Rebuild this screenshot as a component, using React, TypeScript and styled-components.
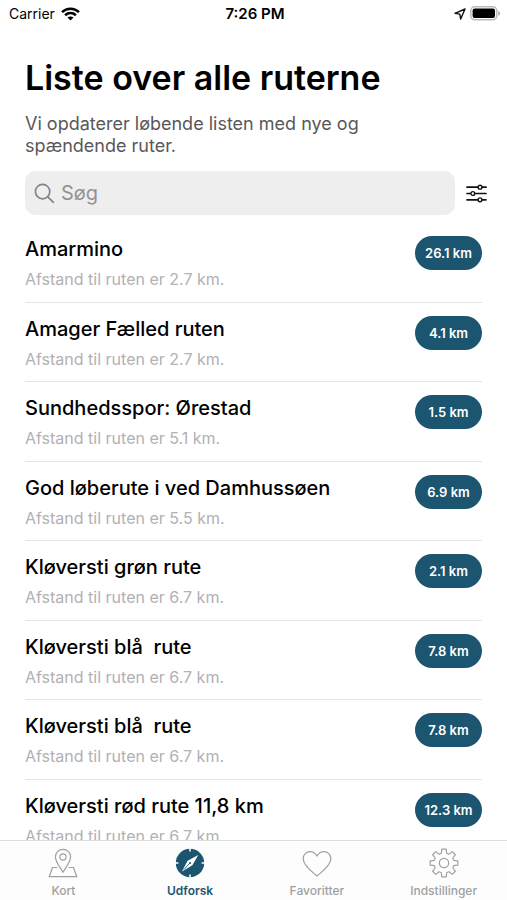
import React, { useState } from "react";
import styled, { createGlobalStyle } from "styled-components";

const teal = "#1c5570";

const GlobalStyle = createGlobalStyle`
  * { box-sizing: border-box; }
  body {
    margin: 0;
    background: #fff;
    color: #000;
    font-family: Inter, "Liberation Sans", sans-serif;
  }
  h1, h2, p, ul { margin: 0; padding: 0; }
  button, input { font: inherit; }
`;

const Screen = styled.div`
  display: flex;
  flex-direction: column;
  height: 100vh;
`;

const StatusBar = styled.header`
  display: grid;
  grid-template-columns: 1fr auto 1fr;
  align-items: center;
  height: 27px;
  flex: none;
  padding: 0 6px 0 9px;
  font-size: 14px;
`;

const StatusGroup = styled.div<{ $end?: boolean }>`
  display: flex;
  align-items: center;
  gap: ${(p) => (p.$end ? "4px" : "6px")};
  justify-content: ${(p) => (p.$end ? "flex-end" : "flex-start")};
`;

const Clock = styled.span`
  font-size: 15px;
  font-weight: 600;
`;

const Content = styled.main`
  flex: 1;
  min-height: 0;
  overflow-y: auto;
  scrollbar-width: none;
  padding: 31px 25px 0;
`;

const Title = styled.h1`
  font-size: 34px;
  line-height: 40px;
  font-weight: 600;
`;

const Intro = styled.p`
  max-width: 350px;
  margin-top: 15px;
  font-size: 18px;
  line-height: 22px;
  color: #58585a;
`;

const SearchRow = styled.form`
  display: flex;
  align-items: center;
  gap: 11px;
  margin: 14px -5px 0 0;
`;

const SearchField = styled.label`
  flex: 1;
  display: flex;
  align-items: center;
  gap: 6px;
  height: 44px;
  padding: 0 9px;
  border-radius: 11px;
  background: #eee;
  color: #858588;
`;

const SearchInput = styled.input`
  flex: 1;
  min-width: 0;
  padding: 0;
  border: 0;
  outline: 0;
  background: transparent;
  font-size: 20px;
  color: #000;
  &::placeholder { color: #929295; opacity: 1; }
`;

const FilterButton = styled.button`
  display: flex;
  padding: 0;
  border: 0;
  background: none;
  color: #111;
`;

const RouteList = styled.ul`
  margin-top: 8px;
  list-style: none;
`;

const RouteItem = styled.li`
  display: flex;
  align-items: flex-start;
  justify-content: space-between;
  height: 79px;
  padding-top: 13px;
  border-bottom: 1px solid #e4e4e5;
  &:nth-child(odd) { height: 80px; }
`;

const RouteName = styled.h2`
  font-size: 20px;
  line-height: 26px;
  font-weight: 500;
  white-space: pre;
`;

const Distance = styled.p`
  margin-top: 6px;
  font-size: 16px;
  line-height: 22px;
  color: #b1b1b3;
`;

const LengthBadge = styled.span`
  display: flex;
  align-items: center;
  justify-content: center;
  width: 67px;
  height: 34px;
  border-radius: 17px;
  background: ${teal};
  color: #fff;
  font-size: 13px;
  font-weight: 600;
`;

const TabBar = styled.nav`
  display: grid;
  grid-template-columns: repeat(4, 1fr);
  flex: none;
  height: 60px;
  border-top: 1px solid #dedede;
  background: #fdfdfd;
`;

const Tab = styled.button<{ $active: boolean }>`
  display: flex;
  flex-direction: column;
  align-items: center;
  gap: 5px;
  padding: 7px 0 0;
  border: 0;
  background: none;
  color: ${(p) => (p.$active ? teal : "#a0a0a0")};
  font-size: 12px;
  line-height: 16px;
  font-weight: ${(p) => (p.$active ? 600 : 500)};
`;

const WifiIcon = () => (
  <svg width="19" height="14" viewBox="0 0 19 14" fill="none" stroke="#000" strokeWidth="2.5" aria-label="Wi-Fi">
    <path d="M1 5.1 C5.8.5 13.2.5 18 5.1M4.1 8.2c3.1-2.8 7.7-2.8 10.8 0" />
    <path d="M9.5 13.6 6.5 10.6c1.6-1.5 4.4-1.5 6 0Z" fill="#000" stroke="none" />
  </svg>
);

const LocationIcon = () => (
  <svg width="12" height="12" viewBox="0 0 12 12" fill="none" stroke="#111" strokeWidth="1.4" strokeLinejoin="round" aria-label="Placering">
    <path d="M11 1 1 5.3l4.8.8.9 4.9Z" />
  </svg>
);

const BatteryIcon = () => (
  <svg width="31" height="15" viewBox="0 0 31 15" aria-label="Batteri">
    <rect x=".8" y=".8" width="26" height="13" rx="4" fill="#fff" stroke="#bbb" strokeWidth="1.5" />
    <rect x="2.6" y="2.6" width="22.4" height="9.4" rx="2" fill="#000" />
    <path d="M28.3 5c2.4.8 2.4 4 0 4.8Z" fill="#aaa" />
  </svg>
);

const SearchIcon = () => (
  <svg width="21" height="21" viewBox="0 0 21 21" fill="none" stroke="currentColor" strokeWidth="1.7" strokeLinecap="round" aria-hidden="true">
    <circle cx="8.6" cy="8.6" r="7.2" />
    <path d="m13.8 13.8 5.6 5.6" />
  </svg>
);

const FilterIcon = () => (
  <svg width="21" height="19" viewBox="0 0 21 19" fill="#fff" stroke="currentColor" strokeWidth="1.7" strokeLinecap="round" aria-hidden="true">
    <path d="M1 3.2h19M1 9.5h19M1 15.8h19" />
    <g strokeWidth="1.4">
      <circle cx="14" cy="3.2" r="1.9" />
      <circle cx="6.8" cy="9.5" r="1.9" />
      <circle cx="14" cy="15.8" r="1.9" />
    </g>
  </svg>
);

const MapIcon = () => (
  <svg width="30" height="30" viewBox="0 0 30 30" fill="none" stroke="currentColor" strokeWidth="1.2" strokeLinejoin="round" strokeLinecap="round" aria-hidden="true">
    <path d="M15 24.3C12.3 19.2 7.4 14 7.4 9a7.6 7.6 0 0 1 15.2 0c0 5-4.9 10.2-7.6 15.3Z" />
    <circle cx="15" cy="9" r="3.1" />
    <path d="M8.9 19.5H4.5L1.2 28.7h27.6l-3.3-9.2h-4.4" />
  </svg>
);

const CompassIcon = () => (
  <svg width="30" height="30" viewBox="0 0 30 30" aria-hidden="true">
    <circle cx="15" cy="15" r="14.2" fill="currentColor" />
    <path d="M15 0v3.4M15 26.6V30M0 15h3.4M26.6 15H30" stroke="#fff" strokeWidth="1.5" />
    <path d="M23.2 7 17.4 17.2 7 23.4 12.6 12.8Z" fill="#fff" />
    <path d="m14.8 15.2-5.9 6.3" stroke="currentColor" strokeWidth=".9" />
    <circle cx="15.1" cy="15" r="1" fill="currentColor" />
  </svg>
);

const HeartIcon = () => (
  <svg width="30" height="30" viewBox="0 0 30 30" fill="none" stroke="currentColor" strokeWidth="1.2" strokeLinejoin="round" aria-hidden="true">
    <path d="M15 28C12 25 1.2 18.5 1.2 10.6 1.2 6.6 4.3 3.6 8 3.6c3 0 5.4 1.4 7 4.4 1.6-3 4-4.4 7-4.4 3.7 0 6.8 3 6.8 7C28.8 18.5 18 25 15 28Z" />
  </svg>
);

const toothCount = 8;
const gearPath =
  Array.from({ length: toothCount }, (_, i) => {
    const point = (radius: number, degrees: number) => {
      const a = ((degrees + (i * 360) / toothCount - 90) * Math.PI) / 180;
      return `${(15 + radius * Math.cos(a)).toFixed(2)} ${(15 + radius * Math.sin(a)).toFixed(2)}`;
    };
    return `${i ? "L" : "M"}${point(14, -9)}L${point(14, 9)}L${point(11.8, 12)}Q${point(9.8, 14)} ${point(10, 19)}L${point(10, 26)}Q${point(9.8, 31)} ${point(11.8, 33)}`;
  }).join("") + "Z";

const GearIcon = () => (
  <svg width="30" height="30" viewBox="0 0 30 30" fill="none" stroke="currentColor" strokeWidth="1.2" strokeLinejoin="round" aria-hidden="true">
    <path d={gearPath} />
    <circle cx="15" cy="15" r="4.7" />
  </svg>
);

const routes = [
  { name: "Amarmino", away: "2.7", length: "26.1" },
  { name: "Amager Fælled ruten", away: "2.7", length: "4.1" },
  { name: "Sundhedsspor: Ørestad", away: "5.1", length: "1.5" },
  { name: "God løberute i ved Damhussøen", away: "5.5", length: "6.9" },
  { name: "Kløversti grøn rute", away: "6.7", length: "2.1" },
  { name: "Kløversti blå  rute", away: "6.7", length: "7.8" },
  { name: "Kløversti blå  rute", away: "6.7", length: "7.8" },
  { name: "Kløversti rød rute 11,8 km", away: "6.7", length: "12.3" },
];

const tabs = [
  { label: "Kort", Icon: MapIcon },
  { label: "Udforsk", Icon: CompassIcon },
  { label: "Favoritter", Icon: HeartIcon },
  { label: "Indstillinger", Icon: GearIcon },
];

export default function App() {
  const [active, setActive] = useState("Udforsk");
  return (
    <Screen>
      <GlobalStyle />
      <StatusBar>
        <StatusGroup>
          Carrier <WifiIcon />
        </StatusGroup>
        <Clock>7:26 PM</Clock>
        <StatusGroup $end>
          <LocationIcon />
          <BatteryIcon />
        </StatusGroup>
      </StatusBar>
      <Content>
        <Title>Liste over alle ruterne</Title>
        <Intro>Vi opdaterer løbende listen med nye og spændende ruter.</Intro>
        <SearchRow onSubmit={(e) => e.preventDefault()}>
          <SearchField>
            <SearchIcon />
            <SearchInput type="text" placeholder="Søg" aria-label="Søg" />
          </SearchField>
          <FilterButton type="button" aria-label="Filtrer">
            <FilterIcon />
          </FilterButton>
        </SearchRow>
        <RouteList>
          {routes.map((route, i) => (
            <RouteItem key={i}>
              <div>
                <RouteName>{route.name}</RouteName>
                <Distance>Afstand til ruten er {route.away} km.</Distance>
              </div>
              <LengthBadge>{route.length} km</LengthBadge>
            </RouteItem>
          ))}
        </RouteList>
      </Content>
      <TabBar>
        {tabs.map(({ label, Icon }) => (
          <Tab key={label} type="button" $active={label === active} onClick={() => setActive(label)}>
            <Icon />
            {label}
          </Tab>
        ))}
      </TabBar>
    </Screen>
  );
}
